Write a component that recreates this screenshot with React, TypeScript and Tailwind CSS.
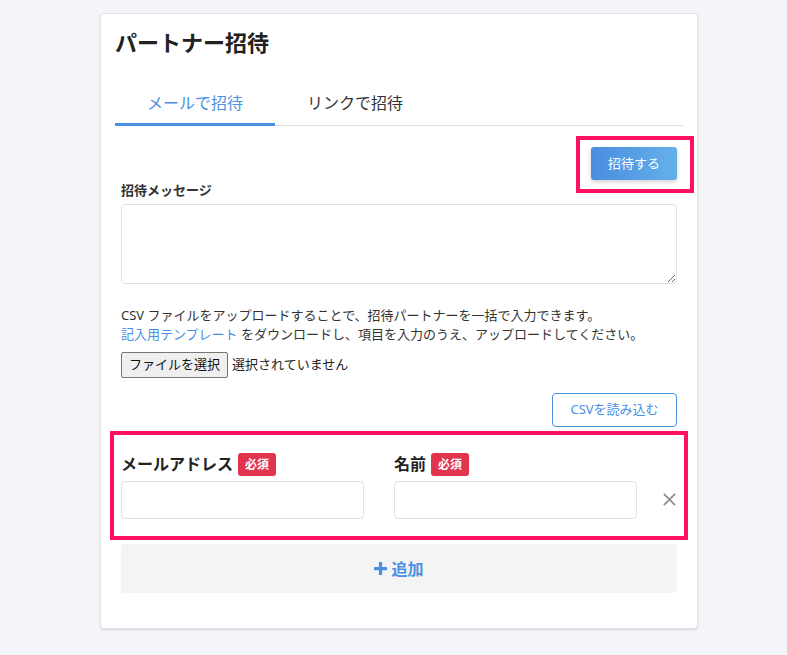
import { useState } from "react";

const font = {
  fontFamily: '"Noto Sans", "Noto Sans CJK JP", sans-serif',
};

function Badge() {
  return (
    <span className="ml-[5px] inline-flex h-[23px] items-center rounded-[3px] bg-[#e2344f] px-[7px] text-[12px] font-bold text-white">
      必須
    </span>
  );
}

export default function App() {
  const [tab, setTab] = useState<"mail" | "link">("mail");

  return (
    <div className="min-h-[655px] bg-[#f4f5f9] pt-[13px] text-[#333]" style={font}>
      <div className="relative ml-[100px] w-[598px] rounded-[4px] border border-[#dfe3e8] bg-white px-[14px] pt-[13px] pb-[35px] shadow-[0_1px_2px_rgba(0,0,0,0.12)]">
        <h1 className="text-[22px] font-bold leading-[30px] text-[#222]">パートナー招待</h1>

        {/* タブ */}
        <div className="mt-[26px] flex border-b border-[#dcdfe3]">
          <button
            type="button"
            onClick={() => setTab("mail")}
            className={`-mb-px w-[160px] border-b-[3px] pt-[8px] pb-[8px] text-[16px] leading-[24px] ${
              tab === "mail" ? "border-[#4a90e2] text-[#4a90e2]" : "border-transparent text-[#333]"
            }`}
          >
            メールで招待
          </button>
          <button
            type="button"
            onClick={() => setTab("link")}
            className={`-mb-px w-[160px] border-b-[3px] pt-[8px] pb-[8px] text-[16px] leading-[24px] ${
              tab === "link" ? "border-[#4a90e2] text-[#4a90e2]" : "border-transparent text-[#333]"
            }`}
          >
            リンクで招待
          </button>
        </div>

        <div className="px-[6px] pt-[21px]">
          <div className="flex justify-end">
            <button
              type="button"
              className="h-[33px] w-[86px] rounded-[3px] bg-gradient-to-r from-[#4a8de0] to-[#64b0ea] text-[13px] text-white shadow-[0_2px_4px_rgba(0,0,0,0.18)]"
            >
              招待する
            </button>
          </div>

          <label className="mt-[1px] block text-[13px] font-bold leading-[18px] text-[#333]">
            招待メッセージ
          </label>
          <textarea className="mt-[5px] block h-[80px] w-full rounded-[4px] border border-[#dde3e8] p-2 text-[13px] outline-none" />

          <p className="mt-[22px] text-[13px] leading-[19px] text-[#333]">
            CSV ファイルをアップロードすることで、招待パートナーを一括で入力できます。
            <br />
            <a href="#" className="text-[#4a90e2]">
              記入用テンプレート
            </a>{" "}
            をダウンロードし、項目を入力のうえ、アップロードしてください。
          </p>

          <div className="mt-[8px] flex items-center">
            <button
              type="button"
              className="h-[26px] rounded-[2px] border border-[#767676] bg-[#efefef] px-[7px] text-[13px] text-[#111]"
            >
              ファイルを選択
            </button>
            <span className="ml-[4px] text-[13px] text-[#222]">選択されていません</span>
          </div>

          <div className="mt-[15px] flex justify-end">
            <button
              type="button"
              className="h-[34px] w-[125px] rounded-[4px] border border-[#4a90e2] bg-white text-[13px] text-[#4a90e2]"
            >
              CSVを読み込む
            </button>
          </div>

          {/* 入力行 */}
          <div className="mt-[26px] flex items-end">
            <div className="w-[243px] shrink-0">
              <div className="flex items-center">
                <span className="text-[16px] font-bold leading-[23px] text-[#222]">メールアドレス</span>
                <Badge />
              </div>
              <input className="mt-[5px] block h-[38px] w-full rounded-[4px] border border-[#dde3e8] px-2 outline-none" />
            </div>
            <div className="ml-[30px] w-[243px] shrink-0">
              <div className="flex items-center">
                <span className="text-[16px] font-bold leading-[23px] text-[#222]">名前</span>
                <Badge />
              </div>
              <input className="mt-[5px] block h-[38px] w-full rounded-[4px] border border-[#dde3e8] px-2 outline-none" />
            </div>
            <div className="flex flex-1 justify-end pb-[12px]">
              <button type="button" className="text-[#8a8a8a]">
                <svg width="15" height="15" viewBox="0 0 16 16" fill="none" stroke="currentColor" strokeWidth="1.7">
                  <path d="M2 2 L14 14 M14 2 L2 14" />
                </svg>
              </button>
            </div>
          </div>

          <button
            type="button"
            className="mt-[25px] flex h-[49px] w-full items-center justify-center rounded-[4px] bg-[#f4f4f4] text-[16px] font-bold text-[#4a90e2]"
          >
            <svg width="13" height="13" viewBox="0 0 12 12" className="mr-[4px]">
              <path d="M4.5 0h3v4.5H12v3H7.5V12h-3V7.5H0v-3h4.5z" fill="currentColor" />
            </svg>
            追加
          </button>
        </div>

        {/* 強調枠 */}
        <div className="pointer-events-none absolute left-[475px] top-[122px] h-[57px] w-[118px] border-[4px] border-[#ff1060]" />
        <div className="pointer-events-none absolute left-[9px] top-[417px] h-[109px] w-[578px] border-[4px] border-[#ff1060]" />
      </div>
    </div>
  );
}
